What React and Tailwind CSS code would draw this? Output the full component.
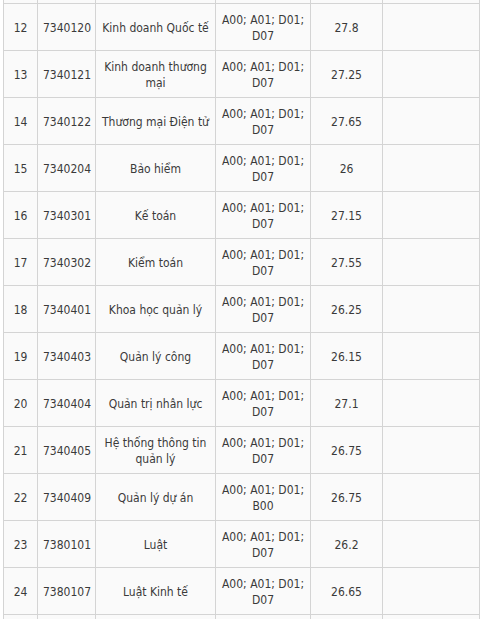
import React from "react";

const rows = [
  ["12", "7340120", "Kinh doanh Quốc tế", "A00; A01; D01; D07", "27.8"],
  ["13", "7340121", "Kinh doanh thương mại", "A00; A01; D01; D07", "27.25"],
  ["14", "7340122", "Thương mại Điện tử", "A00; A01; D01; D07", "27.65"],
  ["15", "7340204", "Bảo hiểm", "A00; A01; D01; D07", "26"],
  ["16", "7340301", "Kế toán", "A00; A01; D01; D07", "27.15"],
  ["17", "7340302", "Kiểm toán", "A00; A01; D01; D07", "27.55"],
  ["18", "7340401", "Khoa học quản lý", "A00; A01; D01; D07", "26.25"],
  ["19", "7340403", "Quản lý công", "A00; A01; D01; D07", "26.15"],
  ["20", "7340404", "Quản trị nhân lực", "A00; A01; D01; D07", "27.1"],
  ["21", "7340405", "Hệ thống thông tin quản lý", "A00; A01; D01; D07", "26.75"],
  ["22", "7340409", "Quản lý dự án", "A00; A01; D01; B00", "26.75"],
  ["23", "7380101", "Luật", "A00; A01; D01; D07", "26.2"],
  ["24", "7380107", "Luật Kinh tế", "A00; A01; D01; D07", "26.65"],
];

const widths = ["w-[34px]", "w-[58px]", "w-[120px]", "w-[95px]", "w-[72px]", "w-[97px]"];

export default function App() {
  return (
    <div className="w-[485px] h-[619px] overflow-hidden bg-white pl-[3px]" style={{ fontFamily: '"DejaVu Sans Condensed", "Liberation Sans", sans-serif' }}>
      <table className="border-collapse table-fixed w-[477px] bg-[#fafafa] text-[#3a3a3a] text-[12px] leading-[16px]">
        <colgroup>
          {widths.map((w, i) => (
            <col key={i} className={w} />
          ))}
        </colgroup>
        <tbody>
          <tr className="h-[3px]">
            {widths.map((w, i) => (
              <td key={i} className="border-x border-[#d4d4d4] p-0 h-[3px]"></td>
            ))}
          </tr>
          {rows.map((r) => (
            <tr key={r[0]} className="h-[47px]">
              {r.map((c, i) => (
                <td key={i} className="border border-[#d4d4d4] px-[5px] pt-[8px] pb-[6px] text-center align-middle">
                  {c}
                </td>
              ))}
              <td className="border border-[#d4d4d4]"></td>
            </tr>
          ))}
          <tr className="h-[47px]">
            {widths.map((w, i) => (
              <td key={i} className="border border-[#d4d4d4]"></td>
            ))}
          </tr>
        </tbody>
      </table>
    </div>
  );
}
